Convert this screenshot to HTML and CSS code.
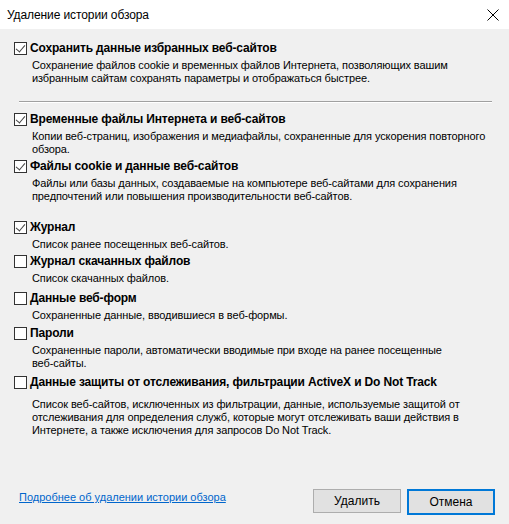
FILE: index.html
```html
<!DOCTYPE html>
<html lang="ru">
<head>
    <meta charset="UTF-8">
    <title>Удаление истории обзора</title>
    <link rel="stylesheet" href="styles.css">
</head>
<body>
<div class="dialog">
    <div class="titlebar">
        <span class="title">Удаление истории обзора</span>
        <svg class="close" width="12" height="12" viewBox="0 0 12 12">
            <path d="M0.5 0.5 L11.5 11.5 M11.5 0.5 L0.5 11.5" stroke="#000" stroke-width="1" fill="none"/>
        </svg>
    </div>

    <div class="content">
        <div class="option first">
            <label class="row"><span class="box checked"></span><b>Сохранить данные избранных веб-сайтов</b></label>
            <p class="desc">Сохранение файлов cookie и временных файлов Интернета, позволяющих вашим<br>избранным сайтам сохранять параметры и отображаться быстрее.</p>
        </div>

        <hr class="sep">

        <div class="option">
            <label class="row"><span class="box checked"></span><b>Временные файлы Интернета и веб-сайтов</b></label>
            <p class="desc">Копии веб-страниц, изображения и медиафайлы, сохраненные для ускорения повторного<br>обзора.</p>
        </div>
        <div class="option gap4">
            <label class="row"><span class="box checked"></span><b>Файлы cookie и данные веб-сайтов</b></label>
            <p class="desc">Файлы или базы данных, создаваемые на компьютере веб-сайтами для сохранения<br>предпочтений или повышения производительности веб-сайтов.</p>
        </div>

        <div class="option gap18">
            <label class="row"><span class="box checked"></span><b>Журнал</b></label>
            <p class="desc">Список ранее посещенных веб-сайтов.</p>
        </div>
        <div class="option gap4">
            <label class="row"><span class="box"></span><b>Журнал скачанных файлов</b></label>
            <p class="desc">Список скачанных файлов.</p>
        </div>
        <div class="option gap7">
            <label class="row"><span class="box"></span><b>Данные веб-форм</b></label>
            <p class="desc">Сохраненные данные, вводившиеся в веб-формы.</p>
        </div>
        <div class="option gap5">
            <label class="row"><span class="box"></span><b>Пароли</b></label>
            <p class="desc">Сохраненные пароли, автоматически вводимые при входе на ранее посещенные<br>веб-сайты.</p>
        </div>
        <div class="option gap6">
            <label class="row"><span class="box"></span><b>Данные защиты от отслеживания, фильтрации ActiveX и Do Not Track</b></label>
            <p class="desc wide">Список веб-сайтов, исключенных из фильтрации, данные, используемые защитой от<br>отслеживания для определения служб, которые могут отслеживать ваши действия в<br>Интернете, а также исключения для запросов Do Not Track.</p>
        </div>
    </div>

    <div class="footer">
        <a class="link" href="#">Подробнее об удалении истории обзора</a>
        <div class="buttons">
            <button class="btn" type="button">Удалить</button>
            <button class="btn default" type="button">Отмена</button>
        </div>
    </div>
</div>
</body>
</html>
```

FILE: styles.css
```css
html, body {
    margin: 0;
    padding: 0;
}
body {
    width: 509px;
    height: 524px;
    background: #f0f0f0;
    font-family: "Liberation Sans", Arial, sans-serif;
    font-size: 12px;
    color: #000;
}
.dialog {
    display: flex;
    flex-direction: column;
    height: 524px;
}
.titlebar {
    height: 29px;
    background: #fff;
    display: flex;
    align-items: center;
    justify-content: space-between;
    padding: 0 10px 0 7px;
}
.title {
    line-height: 16px;
    letter-spacing: -0.1px;
}
.content {
    padding: 13px 15px 0 14px;
    flex: 1;
}
.option {
    margin: 0;
}
.gap4 { margin-top: 4px; }
.gap5 { margin-top: 5px; }
.gap6 { margin-top: 6px; }
.gap7 { margin-top: 7px; }
.gap18 { margin-top: 18px; }
.row {
    display: flex;
    align-items: center;
    height: 13px;
    line-height: 13px;
    white-space: nowrap;
}
.row b {
    font-weight: 700;
    margin-left: 3px;
    letter-spacing: -0.15px;
}
/* case a cocher facon Windows 10 */
.box {
    width: 11px;
    height: 11px;
    border: 1px solid #333;
    background: #fff;
    position: relative;
    flex: none;
}
.box.checked::after {
    content: "";
    position: absolute;
    left: 3px;
    top: 0px;
    width: 4px;
    height: 8px;
    border: solid #444;
    border-width: 0 1px 1px 0;
    transform: rotate(40deg);
}
.desc {
    margin: 4px 0 0 18px;
    font-size: 11px;
    line-height: 13px;
    letter-spacing: -0.1px;
    white-space: nowrap;
}
.desc.wide {
    margin-top: 9px;
}
.sep {
    margin: 16px 2px 10px 5px;
    border: 0;
    border-top: 1px solid #a0a0a0;
    border-bottom: 1px solid #fff;
    height: 0;
}
.footer {
    display: flex;
    align-items: center;
    justify-content: space-between;
    padding: 0 14px 10px 19px;
    height: 25px;
}
.link {
    color: #0066cc;
    font-size: 11px;
    text-decoration: underline;
    margin-top: -9px;
}
.buttons {
    display: flex;
    gap: 6px;
}
.btn {
    font: inherit;
    width: 88px;
    height: 24px;
    background: #e1e1e1;
    border: 1px solid #adadad;
    padding: 0;
    color: #000;
}
.btn.default {
    border: 2px solid #0078d7;
    height: 26px;
    width: 88px;
}
```
